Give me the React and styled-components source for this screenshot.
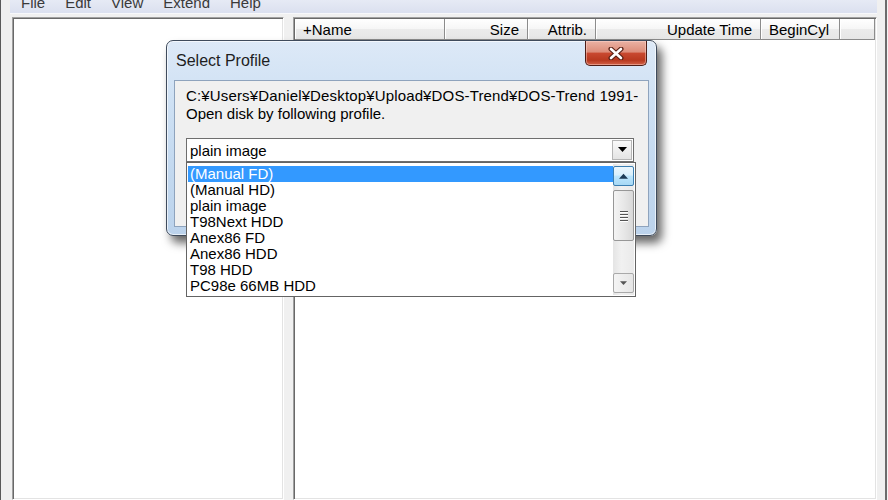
import styled, { createGlobalStyle } from "styled-components";

const GlobalStyle = createGlobalStyle`
  html, body { margin: 0; padding: 0; }
  body {
    font-family: "Liberation Sans", Arial, sans-serif;
    background: #f4f4f4;
  }
`;

const Window = styled.div`
  position: relative;
  width: 887px;
  height: 500px;
  overflow: hidden;
  box-sizing: border-box;
  background: #f0f0f0;
  border-left: 1px solid #5a5a5a;
  border-right: 2px solid #6c6c6c;
  padding: 0 8px 0 9px;
  display: flex;
  flex-direction: column;
`;

const MenuBar = styled.div`
  height: 13px;
  flex: none;
  overflow: hidden;
  display: flex;
  gap: 20px;
  padding-left: 11px;
  background: linear-gradient(#e6eaf5, #dbe0ef);
  border-bottom: 1px solid #f7f8fb;
`;

const MenuItem = styled.span`
  margin-top: -6px;
  line-height: 18px;
  font-size: 15px;
  color: #3a3a3a;
`;

const Body = styled.div`
  flex: 1;
  display: flex;
  padding: 3px 0 0 2px;
  min-height: 0;
`;

const Pane = styled.div`
  box-sizing: border-box;
  background: #fff;
  border: 1px solid;
  border-color: #a0a0a0 #ffffff #ffffff #a0a0a0;
  box-shadow: inset 1px 1px 0 #696969, inset -1px -1px 0 #e3e3e3;
  padding: 1px;
  display: flex;
  flex-direction: column;
`;

const TreePane = styled(Pane)`
  width: 272px;
  flex: none;
`;

const Splitter = styled.div`
  width: 9px;
  flex: none;
`;

const ListPane = styled(Pane)`
  flex: 1;
`;

const Header = styled.div`
  display: flex;
  height: 21px;
  flex: none;
`;

const HeaderCell = styled.div`
  box-sizing: border-box;
  width: ${(p) => (p.$w ? `${p.$w}px` : "auto")};
  flex: ${(p) => (p.$w ? "none" : "1")};
  padding: 1px ${(p) => (p.$right ? "8px" : "0")} 0 ${(p) => (p.$right ? "0" : "8px")};
  text-align: ${(p) => (p.$right ? "right" : "left")};
  font-size: 15px;
  line-height: 20px;
  color: #000;
  white-space: nowrap;
  background: linear-gradient(#ffffff 0%, #f6f6f6 50%, #ebebeb 51%, #e6e6e6 100%);
  border-right: 1px solid #8c8c8c;
  border-bottom: 1px solid #8a8a8a;
  box-shadow: inset 1px 0 0 #ffffff;
`;

const Dialog = styled.div`
  position: absolute;
  left: 165px;
  top: 40px;
  width: 491px;
  height: 196px;
  box-sizing: border-box;
  border: 1px solid #3f4b5c;
  border-radius: 7px;
  background: linear-gradient(#dde9f7 0%, #cfe1f4 30%, #c2d8ef 70%, #bcd3ec 100%);
  box-shadow: inset 0 0 0 1px rgba(255, 255, 255, 0.65),
    5px 7px 10px rgba(0, 0, 0, 0.6);
  display: flex;
  flex-direction: column;
  padding: 0 7px 8px 7px;
`;

const TitleBar = styled.div`
  height: 39px;
  flex: none;
  display: flex;
  justify-content: space-between;
  align-items: flex-start;
`;

const Title = styled.span`
  margin: 10px 0 0 2px;
  font-size: 16px;
  line-height: 20px;
  color: #1e1e1e;
`;

const CloseButton = styled.div`
  width: 62px;
  height: 25px;
  margin-right: 2px;
  box-sizing: border-box;
  border: 1px solid #4e1d16;
  border-top: none;
  border-radius: 0 0 5px 5px;
  background: linear-gradient(#eab2a4 0%, #dd8d7a 45%, #c8482f 52%, #b8391f 80%, #d26147 100%);
  box-shadow: inset 0 0 0 1px rgba(255, 220, 210, 0.45);
  display: flex;
  align-items: center;
  justify-content: center;
`;

const Client = styled.div`
  flex: 1;
  box-sizing: border-box;
  background: #f0f0f0;
  border: 1px solid #8ea3bd;
  padding: 6px 2px 0 11px;
  display: flex;
  flex-direction: column;
`;

const Label = styled.div`
  font-size: 15px;
  line-height: 18px;
  color: #000;
  white-space: nowrap;
  overflow: hidden;
  letter-spacing: ${(p) => (p.$wide ? "0.15px" : "0")};
`;

const ComboWrap = styled.div`
  position: relative;
  margin-top: 15px;
  width: 448px;
`;

const Combo = styled.div`
  height: 24px;
  box-sizing: border-box;
  background: #fff;
  border: 1px solid #6e6e6e;
  display: flex;
  align-items: center;
  justify-content: space-between;
  padding: 0 1px 0 3px;
  font-size: 15px;
  color: #000;
`;

const DropButton = styled.div`
  width: 20px;
  height: 20px;
  box-sizing: border-box;
  border: 1px solid #b5b5b5;
  background: linear-gradient(#fafafa, #e4e4e4);
  display: flex;
  align-items: center;
  justify-content: center;
`;

const DropList = styled.div`
  position: absolute;
  left: 0;
  top: 24px;
  width: 450px;
  height: 135px;
  box-sizing: border-box;
  background: #fff;
  border: 1px solid #646464;
  display: flex;
  padding: 1px;
  z-index: 2;
`;

const Items = styled.div`
  flex: 1;
  padding-top: 2px;
`;

const Item = styled.div`
  height: 16px;
  line-height: 16px;
  padding-left: 2px;
  font-size: 15px;
  white-space: nowrap;
  color: ${(p) => (p.$selected ? "#fff" : "#000")};
  background: ${(p) => (p.$selected ? "#3399ff" : "transparent")};
`;

const ScrollBar = styled.div`
  width: 21px;
  flex: none;
  background: linear-gradient(90deg, #e4e4e4, #f1f1f1 40%, #eaeaea);
  display: flex;
  flex-direction: column;
  padding: 2px 0;
  box-sizing: border-box;
`;

const ScrollArrow = styled.div`
  height: 20px;
  box-sizing: border-box;
  border: 1px solid ${(p) => (p.$hot ? "#3c7fb1" : "#a9a9a9")};
  border-radius: 2px;
  background: ${(p) =>
    p.$hot
      ? "linear-gradient(#eaf6fd 0%, #d9f0fc 45%, #bee6fd 50%, #a7d9f5 100%)"
      : "linear-gradient(90deg, #f4f4f4, #e6e6e6)"};
  display: flex;
  align-items: center;
  justify-content: center;
`;

const Thumb = styled.div`
  height: 51px;
  margin-top: 4px;
  box-sizing: border-box;
  border: 1px solid #979797;
  border-radius: 2px;
  background: linear-gradient(90deg, #f4f4f4, #e8e8e8 50%, #d9d9d9);
  display: flex;
  flex-direction: column;
  align-items: center;
  justify-content: center;
  gap: 2px;
`;

const Grip = styled.span`
  width: 8px;
  height: 1px;
  background: #555;
  box-shadow: 0 1px 0 #fff;
`;

const Track = styled.div`
  flex: 1;
`;

const TriangleDown = ({ color = "#000", w = 9 }) => (
  <svg width={w} height={w / 2 + 1} viewBox="0 0 10 6">
    <path d="M0 0 L10 0 L5 5.5 Z" fill={color} />
  </svg>
);

const TriangleUp = ({ color = "#000" }) => (
  <svg width="9" height="6" viewBox="0 0 10 6">
    <path d="M0 6 L10 6 L5 0.5 Z" fill={color} />
  </svg>
);

const CloseGlyph = () => (
  <svg width="16" height="13" viewBox="0 0 16 13">
    <path d="M3 2 L13 11 M13 2 L3 11" stroke="#5a2015" strokeWidth="5" strokeLinecap="round" />
    <path d="M3 2 L13 11 M13 2 L3 11" stroke="#ffffff" strokeWidth="2.6" strokeLinecap="round" />
  </svg>
);

const profiles = [
  "(Manual FD)",
  "(Manual HD)",
  "plain image",
  "T98Next HDD",
  "Anex86 FD",
  "Anex86 HDD",
  "T98 HDD",
  "PC98e 66MB HDD",
];

const columns = [
  { label: "+Name", w: 150 },
  { label: "Size", w: 83, right: true },
  { label: "Attrib.", w: 68, right: true },
  { label: "Update Time", w: 165, right: true },
  { label: "BeginCyl", w: 79 },
  { label: "" },
];

function App() {
  return (
    <>
      <GlobalStyle />
      <Window>
        <MenuBar>
          {["File", "Edit", "View", "Extend", "Help"].map((m) => (
            <MenuItem key={m}>{m}</MenuItem>
          ))}
        </MenuBar>
        <Body>
          <TreePane />
          <Splitter />
          <ListPane>
            <Header>
              {columns.map((c, i) => (
                <HeaderCell key={i} $w={c.w} $right={c.right}>
                  {c.label}
                </HeaderCell>
              ))}
            </Header>
          </ListPane>
        </Body>

        <Dialog>
          <TitleBar>
            <Title>Select Profile</Title>
            <CloseButton>
              <CloseGlyph />
            </CloseButton>
          </TitleBar>
          <Client>
            <Label $wide>C:¥Users¥Daniel¥Desktop¥Upload¥DOS-Trend¥DOS-Trend 1991-</Label>
            <Label>Open disk by following profile.</Label>
            <ComboWrap>
              <Combo>
                <span>plain image</span>
                <DropButton>
                  <TriangleDown />
                </DropButton>
              </Combo>
              <DropList>
                <Items>
                  {profiles.map((p, i) => (
                    <Item key={p} $selected={i === 0}>
                      {p}
                    </Item>
                  ))}
                </Items>
                <ScrollBar>
                  <ScrollArrow $hot>
                    <TriangleUp color="#1c3b57" />
                  </ScrollArrow>
                  <Thumb>
                    <Grip />
                    <Grip />
                    <Grip />
                    <Grip />
                  </Thumb>
                  <Track />
                  <ScrollArrow>
                    <TriangleDown color="#555" w={7} />
                  </ScrollArrow>
                </ScrollBar>
              </DropList>
            </ComboWrap>
          </Client>
        </Dialog>
      </Window>
    </>
  );
}

export default App;
